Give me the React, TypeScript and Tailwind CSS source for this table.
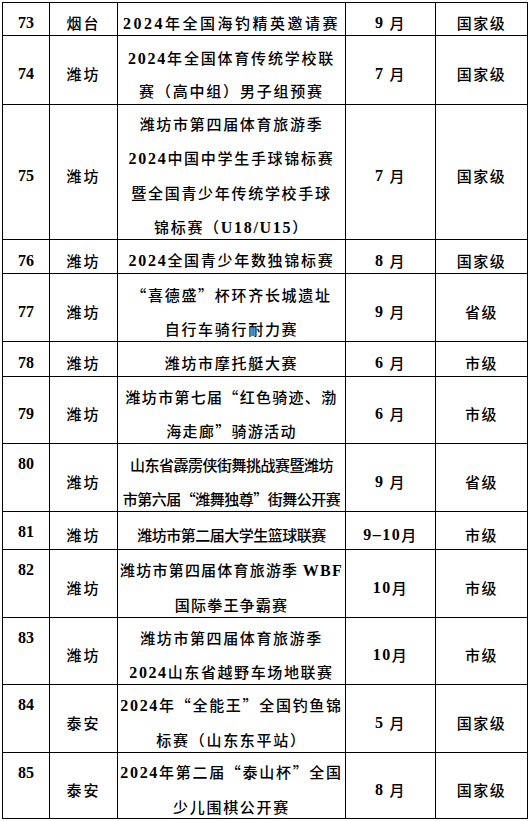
import React from "react";

type Row = {
  n: string;
  city: string;
  lines: string[];
  m: string;
  lv: string;
  h: string;
  top: boolean;
  tr: string;
};

const rows: Row[] = [
  { n: "73", city: "烟台", lines: ["2024年全国海钓精英邀请赛"], m: "9 月", lv: "国家级", h: "grid-rows-[33px]", top: false, tr: "tracking-[2.5px]" },
  { n: "74", city: "潍坊", lines: ["2024年全国体育传统学校联", "赛（高中组）男子组预赛"], m: "7 月", lv: "国家级", h: "grid-rows-[69px]", top: false, tr: "tracking-[1.8px] leading-[32px]" },
  { n: "75", city: "潍坊", lines: ["潍坊市第四届体育旅游季", "2024中国中学生手球锦标赛", "暨全国青少年传统学校手球", "锦标赛（U18/U15）"], m: "7 月", lv: "国家级", h: "grid-rows-[135px]", top: false, tr: "tracking-[1.7px]" },
  { n: "76", city: "潍坊", lines: ["2024全国青少年数独锦标赛"], m: "8 月", lv: "国家级", h: "grid-rows-[34px]", top: false, tr: "tracking-[1.7px]" },
  { n: "77", city: "潍坊", lines: ["“喜德盛”杯环齐长城遗址", "自行车骑行耐力赛"], m: "9 月", lv: "省级", h: "grid-rows-[68px]", top: false, tr: "tracking-[1.7px]" },
  { n: "78", city: "潍坊", lines: ["潍坊市摩托艇大赛"], m: "6 月", lv: "市级", h: "grid-rows-[35px]", top: false, tr: "tracking-[1.7px]" },
  { n: "79", city: "潍坊", lines: ["潍坊市第七届“红色骑迹、渤", "海走廊”骑游活动"], m: "6 月", lv: "市级", h: "grid-rows-[67px]", top: false, tr: "tracking-[1.3px]" },
  { n: "80", city: "潍坊", lines: ["山东省霹雳侠街舞挑战赛暨潍坊", "市第六届“潍舞独尊”街舞公开赛"], m: "9 月", lv: "省级", h: "grid-rows-[68px]", top: true, tr: "tracking-[-0.5px]" },
  { n: "81", city: "潍坊", lines: ["潍坊市第二届大学生篮球联赛"], m: "9–10月", lv: "市级", h: "grid-rows-[38px]", top: true, tr: "tracking-[-0.5px]" },
  { n: "82", city: "潍坊", lines: ["潍坊市第四届体育旅游季 WBF", "国际拳王争霸赛"], m: "10月", lv: "市级", h: "grid-rows-[68px]", top: true, tr: "tracking-[1.2px]" },
  { n: "83", city: "潍坊", lines: ["潍坊市第四届体育旅游季", "2024山东省越野车场地联赛"], m: "10月", lv: "市级", h: "grid-rows-[67px]", top: true, tr: "tracking-[1.6px]" },
  { n: "84", city: "泰安", lines: ["2024年“全能王”全国钓鱼锦", "标赛（山东东平站）"], m: "5 月", lv: "国家级", h: "grid-rows-[68px]", top: true, tr: "tracking-[1.7px]" },
  { n: "85", city: "泰安", lines: ["2024年第二届“泰山杯”全国", "少儿围棋公开赛"], m: "8 月", lv: "国家级", h: "grid-rows-[66px]", top: true, tr: "tracking-[1.7px]" },
];

function Txt({ s }: { s: string }) {
  const parts = s.split(/([0-9A-Za-z/–]+)/);
  return (
    <>
      {parts.map((p, i) =>
        /^[0-9A-Za-z/–]+$/.test(p) ? (
          <span key={i} className="[font-family:'Liberation_Serif',serif] font-bold text-[16px]">
            {p}
          </span>
        ) : (
          <span key={i}>{p}</span>
        )
      )}
    </>
  );
}

export default function App() {
  return (
    <div className="w-[530px] h-[821px] bg-white overflow-hidden pt-[2px] pl-[2px]">
      <div className="w-[526px] border-l border-t border-black text-black [font-family:'Noto_Sans_CJK_SC',sans-serif] font-medium text-[15px] leading-[34px]">
        {rows.map((r) => (
          <div key={r.n} className={`grid grid-cols-[47px_68px_228px_90px_92px] ${r.h}`}>
            <div
              className={`border-r border-b border-black flex justify-center overflow-visible ${
                r.top ? "items-start pt-[3px]" : "items-center pt-2"
              }`}
            >
              <span className="[font-family:'Liberation_Serif',serif] font-bold text-[16px]">{r.n}</span>
            </div>
            <div className="border-r border-b border-black flex items-center justify-center pt-2 tracking-[2px] min-h-0">
              {r.city}
            </div>
            <div className={`border-r border-b border-black flex flex-col items-center justify-center pt-2 whitespace-nowrap min-h-0 ${r.tr}`}>
              {r.lines.map((l, i) => (
                <div key={i}>
                  <Txt s={l} />
                </div>
              ))}
            </div>
            <div className="border-r border-b border-black flex items-center justify-center pt-2 tracking-[1.5px] whitespace-pre min-h-0">
              <Txt s={r.m} />
            </div>
            <div className="border-r border-b border-black flex items-center justify-center pt-2 tracking-[1.5px] min-h-0">
              {r.lv}
            </div>
          </div>
        ))}
      </div>
    </div>
  );
}
